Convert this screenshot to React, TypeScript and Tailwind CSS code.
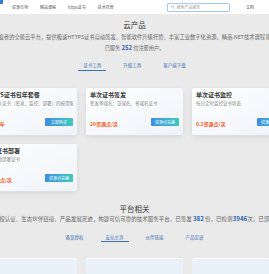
import React from "react";

const navItems = ["资源市场", "精品课程", "https证书", "技术托管"];

const products = [
  { title: "HTTPS证书包年套餐", desc: "享受全年证书（签发、监控、部署）的按需服务", price: "199元/年", action: "立即购买" },
  { title: "单次证书签发", desc: "签发单域名、泛域名、多域名证书", price: "20资源点/次", action: "资源点兑换" },
  { title: "单次证书监控", desc: "每日定时监控证书状态", price: "0.2资源点/次", action: "资源点兑换" },
  { title: "单次证书部署", desc: "一键自动部署证书", price: "10资源点/次", action: "资源点兑换" },
];

function Tabs({ items, active }: { items: string[]; active: number }) {
  return (
    <div className="flex justify-center gap-[12px]">
      {items.map((item, i) => (
        <div
          key={item}
          className={
            "px-[5px] pb-[1.5px] text-[4.5px] leading-[5px] text-[#3a72b8] border-b-[1.5px] " +
            (i === active ? "border-[#3a72b8]" : "border-transparent")
          }
        >
          {item}
        </div>
      ))}
    </div>
  );
}

function ProductCard({ title, desc, price, action }: (typeof products)[number]) {
  return (
    <div className="h-[47px] flex flex-col px-[4px] pt-[4px] pb-[9px] rounded-[2px] bg-linear-to-br from-white to-[#eff2f7] shadow-[0_2px_6px_rgba(0,0,0,0.08)]">
      <div className="text-[6px] leading-[6px] font-bold text-[#333]">{title}</div>
      <div className="mt-[3px] text-[4.5px] leading-[5px] text-[#888] whitespace-nowrap overflow-hidden">
        {desc}
      </div>
      <div className="mt-auto flex items-end justify-between">
        <span className="text-[5px] leading-[5px] font-bold text-[#ee5a24]">{price}</span>
        <span className="w-[28px] h-[8px] flex items-center justify-center rounded-[1px] bg-linear-to-r from-[#3f8de2] to-[#3dc8bd] text-[4px] text-white">
          {action}
        </span>
      </div>
    </div>
  );
}

export default function App() {
  return (
    <div className="w-[269px] h-[274px] overflow-hidden bg-[#eaeaea] font-['Noto_Sans_CJK_SC',sans-serif]">
      <div className="h-[14px] bg-white flex items-center">
        <div className="self-start w-[3px] h-[4px] bg-[#2f7bd8] rounded-br-[1px]" />
        <div className="ml-[9px] flex gap-[12px] text-[4px] text-[#555]">
          {navItems.map((n) => (
            <span key={n}>{n}</span>
          ))}
        </div>
        <div className="ml-auto w-[63px] h-[9px] border-[0.75px] border-[#a9c8ea] rounded-[1px] flex items-center px-[3px] gap-[1.5px] text-[4px] text-[#999]">
          <svg width="4" height="4" viewBox="0 0 10 10" fill="none" stroke="#999" strokeWidth="1.2">
            <circle cx="4.3" cy="4.3" r="3.3" />
            <path d="M6.8 6.8 9.3 9.3" />
          </svg>
          <span>搜索产品服务</span>
        </div>
        <span className="ml-[16px] mr-[15px] text-[4px] text-[#555]">文档</span>
      </div>

      <div className="mt-[7px] text-center text-[7.5px] leading-[8px] text-[#333]">云产品</div>
      <div className="mt-[5px] flex justify-center">
        <div className="shrink-0 whitespace-nowrap text-[5.3px] leading-[6px] text-[#666]">
          面向开发者的全能云平台，提供极速HTTPS证书自动签发、智能软件升级托管、丰富工业数字化资源、精品.NET技术课程等一站式
        </div>
      </div>
      <div className="mt-[5px] text-center text-[5.2px] leading-[6px] text-[#666]">
        已服务 <b className="text-[6px] text-[#2f64b0]">252</b> 位注册用户。
      </div>

      <div className="mt-[12px]">
        <Tabs items={["证书工具", "升级工具", "客户端下载"]} active={0} />
      </div>

      <div className="mt-[17px] flex justify-center">
        <div className="shrink-0 w-[309px] grid grid-cols-3 gap-[9px]">
          {products.map((p) => (
            <ProductCard key={p.title} {...p} />
          ))}
        </div>
      </div>

      <div className="mt-[14px] text-center text-[7.5px] leading-[8px] text-[#333]">平台相关</div>
      <div className="mt-[3px] flex justify-center">
        <div className="shrink-0 whitespace-nowrap text-[5.5px] leading-[6px] text-[#666]">
          提供备案授权认证、生态伙伴链接、产品发展足迹，构建可信可靠的技术服务平台，已签发 <b className="text-[6.2px] text-[#2f64b0]">382</b> 份，已检测<b className="text-[6.2px] text-[#2f64b0]">3946</b>次，已部署 <b className="text-[6.2px] text-[#2f64b0]">1208</b> 次
        </div>
      </div>

      <div className="mt-[13px]">
        <Tabs items={["备案授权", "友站主页", "伙伴链接", "产品足迹"]} active={1} />
      </div>

      <div className="mt-[16px] flex justify-center">
        <div className="shrink-0 w-[309px] grid grid-cols-3 gap-[9px]">
          {[0, 1, 2].map((i) => (
            <div key={i} className="h-[60px] rounded-[2px] border-t-[1px] border-white bg-linear-to-b from-[#eaf1fa] to-[#e3ecf7]" />
          ))}
        </div>
      </div>
    </div>
  );
}
